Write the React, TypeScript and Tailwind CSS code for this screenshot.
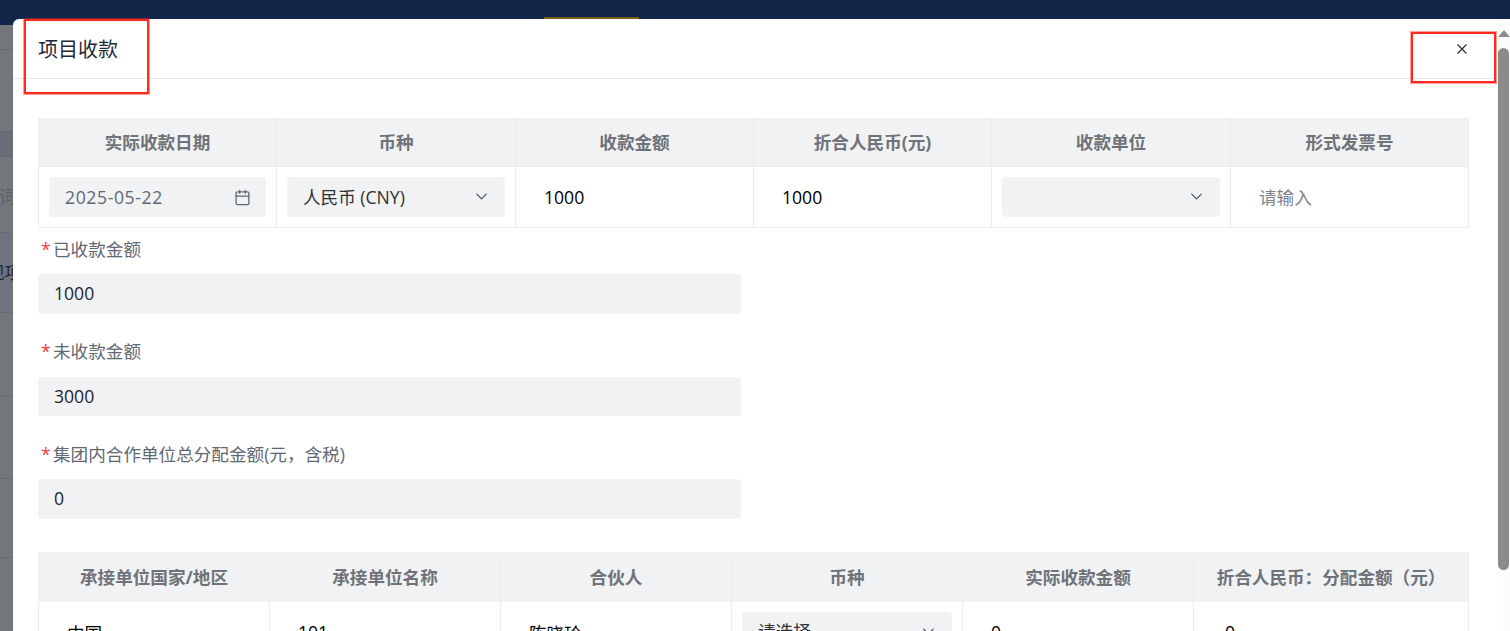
import { Calendar, ChevronDown } from "lucide-react";

const font = "font-['Open_Sans','Noto_Sans_CJK_SC',sans-serif]";
const topCols = "grid-cols-[238px_239px_238px_238px_239px_1fr]";
const partnerCols = "grid-cols-[231px_231px_231px_231px_231px_1fr]";

const topHeaders = ["实际收款日期", "币种", "收款金额", "折合人民币(元)", "收款单位", "形式发票号"];
const partnerHeaders = ["承接单位国家/地区", "承接单位名称", "合伙人", "币种", "实际收款金额", "折合人民币：分配金额（元）"];
const fields = [
  { label: "已收款金额", value: "1000" },
  { label: "未收款金额", value: "3000" },
  { label: "集团内合作单位总分配金额(元，含税)", value: "0" },
];
// rows of the page behind the dialog, only a sliver shows on the left
const backdropRows = [
  { height: "h-[25px]", text: "", cls: "" },
  { height: "h-[25px]", text: "", cls: "" },
  { height: "h-[82px]", text: "", cls: "" },
  { height: "h-[25px]", text: "", cls: "bg-[#6a6d78]" },
  { height: "h-[76px]", text: "词", cls: "pt-[3px] text-[#5c5f66]" },
  { height: "h-[80px]", text: "现项", cls: "text-[#1f2430] bg-[#6f7380]" },
  { height: "h-[83px]", text: "", cls: "" },
  { height: "h-[83px]", text: "", cls: "" },
  { height: "h-[79px]", text: "", cls: "" },
];

function Select({ value }: { value?: string }) {
  return (
    <div className="flex h-[39.6px] items-center justify-between rounded bg-[#f1f2f4] pr-[14px] pl-4 text-[#303133]">
      <span>{value}</span>
      <ChevronDown size={19} strokeWidth={1.6} className="text-[#4b5563]" />
    </div>
  );
}

function TextCell({ value, placeholder, className }: { value?: string; placeholder?: string; className?: string }) {
  return (
    <input
      readOnly
      value={value ?? ""}
      placeholder={placeholder}
      className={`h-full w-full bg-transparent pl-[28px] text-black outline-none placeholder:text-[#7d838c] ${className ?? ""}`}
    />
  );
}

function HeaderRow({ items, cols, height }: { items: string[]; cols: string; height: string }) {
  return (
    <div className={`grid border-b border-[#ebedf0] bg-[#f1f2f4] ${height} ${cols}`}>
      {items.map((item, i) => (
        <div
          key={item}
          className={`flex items-center justify-center font-bold whitespace-nowrap text-[#6f7278] ${i < items.length - 1 ? "border-r border-[#ebedf0]" : ""}`}
        >
          {item}
        </div>
      ))}
    </div>
  );
}

export default function App() {
  return (
    <div className={`relative h-[631px] w-[1510px] overflow-hidden bg-[#73767d] text-[17.6px] ${font}`}>
      {/* page behind the dialog */}
      {backdropRows.map((row, i) => (
        <div
          key={i}
          className={`flex items-center overflow-hidden border-b border-[#686b72] whitespace-nowrap ${row.height} ${row.cls}`}
        >
          {row.text && <span className={row.text === "现项" ? "-ml-[13px]" : "-ml-[1px]"}>{row.text}</span>}
        </div>
      ))}
      <div className="absolute top-0 left-0 flex h-[25px] w-full bg-[#12264a]">
        <div className="mt-[17px] ml-[544px] h-2 w-[95px] bg-[#7a6115]" />
      </div>

      {/* dialog */}
      <div className="absolute top-[19px] right-0 bottom-0 left-[13px] flex overflow-hidden rounded-tl-md bg-white">
        <div className="min-w-0 flex-1">
          <div className="flex h-[60px] items-center justify-between border-b border-[#e5e7eb] pt-[1px] pr-[30px] pl-[25px]">
            <span className="mt-[1px] text-[20px] text-[#1f2937]">项目收款</span>
            <svg width="10" height="10" viewBox="0 0 10 10" className="text-[#1f2937]">
              <path d="M0.5 0.5 9.5 9.5M9.5 0.5 0.5 9.5" fill="none" stroke="currentColor" strokeWidth="1.1" />
            </svg>
          </div>

          <div className="pt-[39px] pr-[28px] pl-[25px]">
            <div className="border border-[#ebedf0]">
              <HeaderRow items={topHeaders} cols={topCols} height="h-[48px]" />
              <div className={`grid h-[60px] ${topCols}`}>
                <div className="flex items-center border-r border-[#ebedf0] px-[10px]">
                  <div className="flex h-[39.6px] w-full items-center justify-between rounded bg-[#f1f2f4] pr-[15px] pl-4 text-[#5f6875]">
                    <span className="tracking-[0.6px]">2025-05-22</span>
                    <Calendar size={17} strokeWidth={1.8} className="text-[#5f6875]" />
                  </div>
                </div>
                <div className="border-r border-[#ebedf0] px-[10px] pt-[10px]">
                  <Select value="人民币 (CNY)" />
                </div>
                <div className="border-r border-[#ebedf0]">
                  <TextCell value="1000" />
                </div>
                <div className="border-r border-[#ebedf0]">
                  <TextCell value="1000" />
                </div>
                <div className="border-r border-[#ebedf0] px-[10px] pt-[10px]">
                  <Select />
                </div>
                <TextCell placeholder="请输入" />
              </div>
            </div>

            <div className="mt-[9px] flex flex-col gap-[26px]">
              {fields.map((field) => (
                <div key={field.label}>
                  <label className="mb-[13px] flex h-6 items-center pl-[3px] text-[#5f6875]">
                    <span className="mr-[4px] w-2 text-[#f5403d]">*</span>
                    {field.label}
                  </label>
                  <div className="flex h-[39.6px] w-[703px] items-center rounded bg-[#f1f2f4] pb-[1px] pl-4 text-[#1f2430]">
                    {field.value}
                  </div>
                </div>
              ))}
            </div>

            <div className="mt-[33px] border border-[#ebedf0]">
              <HeaderRow items={partnerHeaders} cols={partnerCols} height="h-[49px]" />
              <div className={`grid h-[61px] ${partnerCols}`}>
                <div className="border-r border-[#ebedf0]">
                  <TextCell value="中国" />
                </div>
                <div className="border-r border-[#ebedf0]">
                  <TextCell value="101" />
                </div>
                <div className="border-r border-[#ebedf0]">
                  <TextCell value="陈晓玲" />
                </div>
                <div className="border-r border-[#ebedf0] px-[10px] pt-[10px]">
                  <Select value="请选择" />
                </div>
                <div className="border-r border-[#ebedf0]">
                  <TextCell value="0" />
                </div>
                <TextCell value="0" className="pl-[31px]" />
              </div>
            </div>
          </div>
        </div>

        {/* scrollbar */}
        <div className="flex w-[13px] flex-col items-center bg-[#fcfcfc] pt-[11px]">
          <div className="h-0 w-0 border-x-[6px] border-b-[7px] border-x-transparent border-b-[#8b8b8b]" />
          <div className="mt-[11px] h-[522px] w-[11px] shrink-0 rounded-full bg-[#8b8b8b]" />
        </div>
      </div>

      {/* red annotation boxes */}
      <div className="absolute top-[19px] left-[24px] h-[75px] w-[125px] border-2 border-[#ff2a1f] shadow-[0_0_0_1px_rgba(255,42,31,0.45)]" />
      <div className="absolute top-[32px] left-[1411px] h-[51px] w-[85px] border-2 border-[#ff2a1f] shadow-[0_0_0_1px_rgba(255,42,31,0.45)]" />
    </div>
  );
}
